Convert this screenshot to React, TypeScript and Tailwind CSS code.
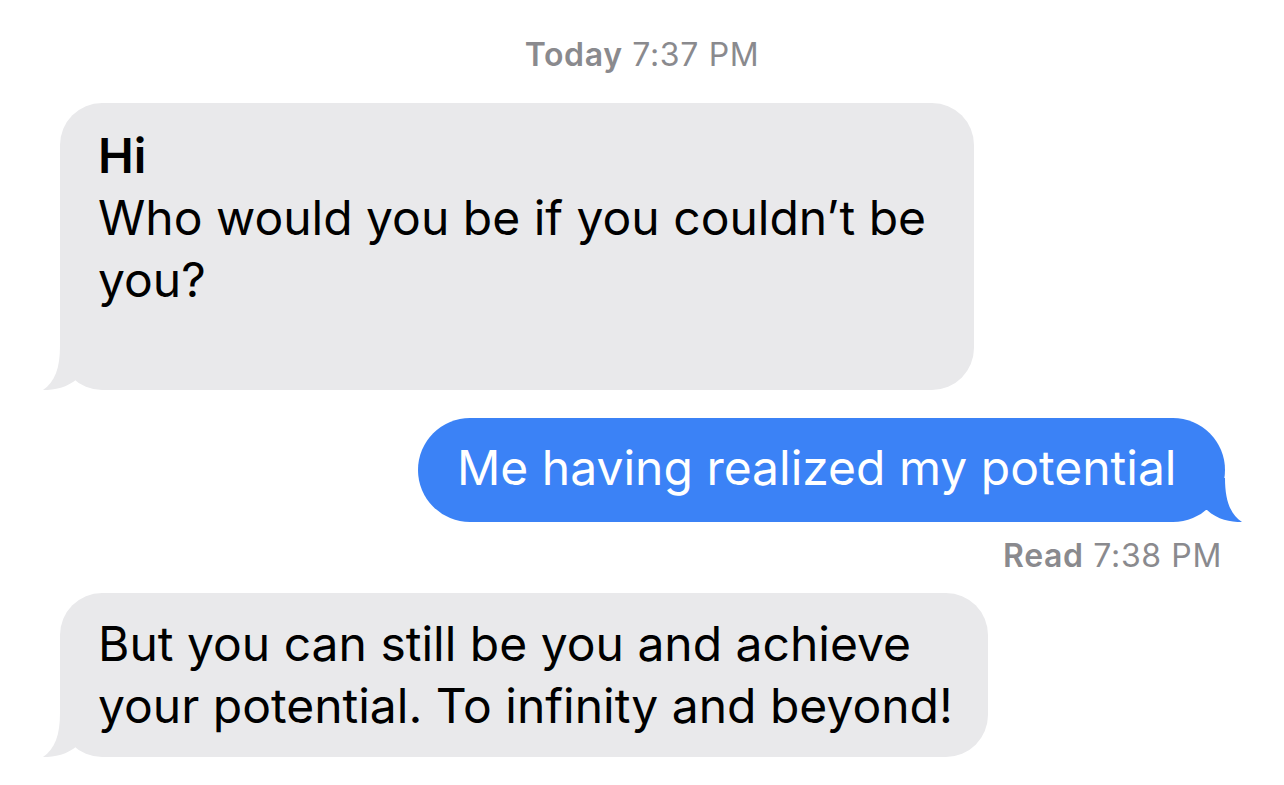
import React from 'react';

function TailLeft({ color }: { color: string }) {
    return (
        <svg
            className="absolute bottom-0 left-[-17px]"
            width="44"
            height="44"
            viewBox="0 0 44 44"
        >
            <path
                d="M17 0 C17 22, 12 36, 0 44 C12 44, 24 42, 35 32 L44 32 L44 0 Z"
                fill={color}
            />
        </svg>
    );
}

function TailRight({ color }: { color: string }) {
    return (
        <svg
            className="absolute bottom-0 right-[-17px]"
            width="44"
            height="44"
            viewBox="0 0 44 44"
        >
            <path
                d="M27 0 C27 22, 32 36, 44 44 C32 44, 20 42, 9 32 L0 32 L0 0 Z"
                fill={color}
            />
        </svg>
    );
}

export default function App() {
    return (
        <div className="w-[1284px] h-[785px] bg-white flex flex-col font-['Inter',sans-serif] text-black overflow-hidden">
            <div className="pt-[36px] text-center text-[32px] leading-[38px] tracking-[0.02em] text-[#8a8a8e]">
                <span className="font-semibold">Today</span> 7:37 PM
            </div>

            <div className="relative ml-[60px] mt-[29px] w-[914px] rounded-[42px] bg-[#e9e9eb] pl-[38px] pr-[30px] pt-[22px] pb-[79px] text-[48px] leading-[62px]">
                <div className="font-semibold">Hi</div>
                <div>Who would you be if you couldn’t be</div>
                <div>you?</div>
                <TailLeft color="#e9e9eb" />
            </div>

            <div className="relative self-end mr-[59px] mt-[28px] w-[807px] h-[104px] rounded-[52px] bg-[#3b82f6] pl-[39px] pt-[19px] text-[48px] leading-[62px] text-white">
                Me having realized my potential
                <TailRight color="#3b82f6" />
            </div>

            <div className="mt-[15px] pr-[62px] text-right text-[32px] leading-[38px] tracking-[0.02em] text-[#8a8a8e]">
                <span className="font-semibold">Read</span> 7:38 PM
            </div>

            <div className="relative ml-[60px] mt-[18px] w-[928px] rounded-[42px] bg-[#e9e9eb] pl-[38px] pr-[30px] pt-[20px] pb-[20px] text-[48px] leading-[62px]">
                <div>But you can still be you and achieve</div>
                <div>your potential. To infinity and beyond!</div>
                <TailLeft color="#e9e9eb" />
            </div>
        </div>
    );
}
